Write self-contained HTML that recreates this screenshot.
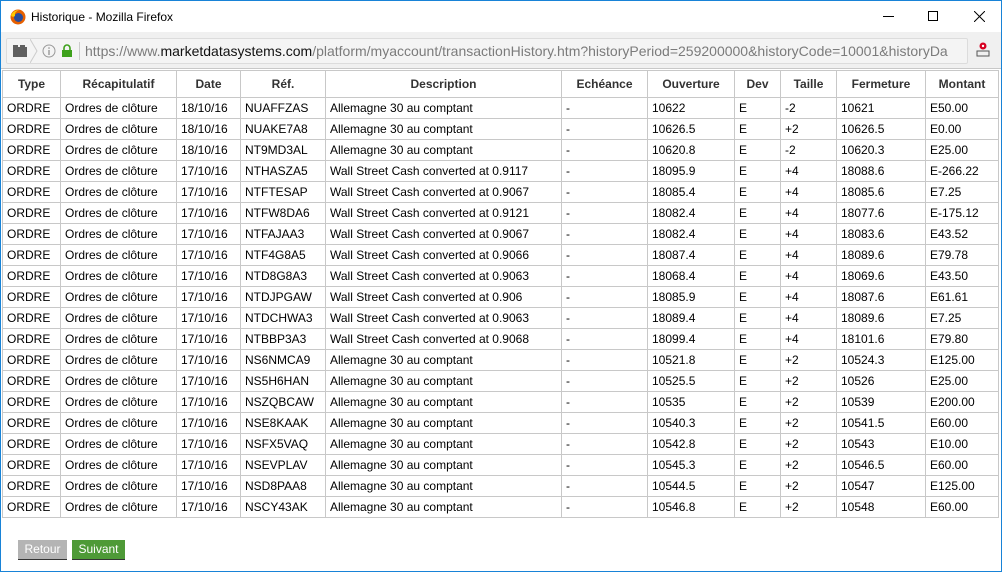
<!DOCTYPE html>
<html><head><style>
*{margin:0;padding:0;box-sizing:border-box}
body{width:1002px;height:572px;overflow:hidden;background:#fff;font-family:"Liberation Sans",Arial,sans-serif;position:relative}
.win{position:absolute;left:0;top:0;width:1002px;height:572px;border:1px solid #1883d7;}
.title{position:absolute;left:0;top:0;width:1000px;height:31px;background:#fff;font-size:12px;color:#000}
.toolbar{position:absolute;left:0;top:31px;width:1000px;height:37px;background:#f0f0f0;border-bottom:1px solid #c8c8c8}
.urlbox{position:absolute;left:5px;top:6px;width:962px;height:26px;background:#f4f4f4;border:1px solid #dcdcdc;border-radius:2px;font-size:14px;color:#7b7b7b;line-height:24px;white-space:nowrap;overflow:hidden}
table{position:absolute;left:1px;top:69px;border-collapse:collapse;font-size:12px;color:#000;table-layout:fixed}
td,th{border:1px solid #c8c8c8;height:21px;padding:0 0 0 4px;white-space:nowrap;overflow:hidden;font-weight:normal;text-align:left}
th{height:27px;font-weight:bold;text-align:center;padding:0;color:#333}
.btn{position:absolute;top:539px;height:20px;font-size:12px;color:#fff;line-height:19px;text-align:center;border-bottom:1px solid #333}
</style></head><body>
<div class="win">
<div class="title">
<svg style="position:absolute;left:9px;top:8px" width="16" height="16" viewBox="0 0 16 16"><circle cx="8" cy="8" r="7.5" fill="#e66000"/><circle cx="8.5" cy="8.5" r="4.5" fill="#2a4d9c"/><path d="M1 6 Q4 1 9 1 Q4 3 5 7 Q2 9 1 6Z" fill="#ffcb00"/></svg>
<span style="position:absolute;left:30px;top:9px">Historique - Mozilla Firefox</span>
<div style="position:absolute;left:882px;top:15px;width:11px;height:1px;background:#000"></div>
<div style="position:absolute;left:927px;top:10px;width:10px;height:10px;border:1px solid #000"></div>
<svg style="position:absolute;left:973px;top:10px" width="11" height="11"><path d="M0 0L11 11M11 0L0 11" stroke="#000" stroke-width="1"/></svg>
</div>
<div class="toolbar">
<div class="urlbox">
<svg style="position:absolute;left:6px;top:6px" width="14" height="12"><rect x="0" y="2" width="14" height="10" fill="#606060"/><rect x="0" y="0" width="5" height="3" fill="#606060"/><rect x="7" y="0" width="5" height="3" fill="#606060"/></svg>
<svg style="position:absolute;left:23px;top:0" width="8" height="24"><path d="M0 0L7 12L0 24" fill="none" stroke="#ccc"/></svg>
<svg style="position:absolute;left:35px;top:5px" width="14" height="14"><circle cx="7" cy="7" r="6" fill="none" stroke="#999"/><rect x="6.3" y="6" width="1.4" height="5" fill="#999"/><rect x="6.3" y="3.3" width="1.4" height="1.5" fill="#999"/></svg>
<svg style="position:absolute;left:54px;top:4px" width="12" height="14"><path d="M3 7V5a3 3 0 0 1 6 0v2" fill="none" stroke="#3ea11b" stroke-width="1.6"/><rect x="1" y="7" width="10" height="7" fill="#3ea11b"/></svg>
<div style="position:absolute;left:72px;top:3px;width:1px;height:18px;background:#ccc"></div>
<span style="position:absolute;left:78px;top:0">https://www.<span style="color:#111">marketdatasystems.com</span>/platform/myaccount/transactionHistory.htm?historyPeriod=259200000&amp;historyCode=10001&amp;historyDa</span>
</div>
<svg style="position:absolute;left:974px;top:10px" width="16" height="16"><circle cx="8" cy="4" r="3.5" fill="#d70022"/><circle cx="8" cy="4" r="1.2" fill="#fff"/><rect x="2" y="9" width="12" height="5" fill="none" stroke="#555"/></svg>
</div>
<table>
<colgroup><col style="width:58px"><col style="width:116px"><col style="width:64px"><col style="width:85px"><col style="width:236px"><col style="width:86px"><col style="width:87px"><col style="width:46px"><col style="width:56px"><col style="width:89px"><col style="width:73px"></colgroup>
<tr><th>Type</th><th>Récapitulatif</th><th>Date</th><th>Réf.</th><th>Description</th><th>Echéance</th><th>Ouverture</th><th>Dev</th><th>Taille</th><th>Fermeture</th><th>Montant</th></tr>
<tr><td>ORDRE</td><td>Ordres de clôture</td><td>18/10/16</td><td>NUAFFZAS</td><td>Allemagne 30 au comptant</td><td>-</td><td>10622</td><td>E</td><td>-2</td><td>10621</td><td>E50.00</td></tr>
<tr><td>ORDRE</td><td>Ordres de clôture</td><td>18/10/16</td><td>NUAKE7A8</td><td>Allemagne 30 au comptant</td><td>-</td><td>10626.5</td><td>E</td><td>+2</td><td>10626.5</td><td>E0.00</td></tr>
<tr><td>ORDRE</td><td>Ordres de clôture</td><td>18/10/16</td><td>NT9MD3AL</td><td>Allemagne 30 au comptant</td><td>-</td><td>10620.8</td><td>E</td><td>-2</td><td>10620.3</td><td>E25.00</td></tr>
<tr><td>ORDRE</td><td>Ordres de clôture</td><td>17/10/16</td><td>NTHASZA5</td><td>Wall Street Cash converted at 0.9117</td><td>-</td><td>18095.9</td><td>E</td><td>+4</td><td>18088.6</td><td>E-266.22</td></tr>
<tr><td>ORDRE</td><td>Ordres de clôture</td><td>17/10/16</td><td>NTFTESAP</td><td>Wall Street Cash converted at 0.9067</td><td>-</td><td>18085.4</td><td>E</td><td>+4</td><td>18085.6</td><td>E7.25</td></tr>
<tr><td>ORDRE</td><td>Ordres de clôture</td><td>17/10/16</td><td>NTFW8DA6</td><td>Wall Street Cash converted at 0.9121</td><td>-</td><td>18082.4</td><td>E</td><td>+4</td><td>18077.6</td><td>E-175.12</td></tr>
<tr><td>ORDRE</td><td>Ordres de clôture</td><td>17/10/16</td><td>NTFAJAA3</td><td>Wall Street Cash converted at 0.9067</td><td>-</td><td>18082.4</td><td>E</td><td>+4</td><td>18083.6</td><td>E43.52</td></tr>
<tr><td>ORDRE</td><td>Ordres de clôture</td><td>17/10/16</td><td>NTF4G8A5</td><td>Wall Street Cash converted at 0.9066</td><td>-</td><td>18087.4</td><td>E</td><td>+4</td><td>18089.6</td><td>E79.78</td></tr>
<tr><td>ORDRE</td><td>Ordres de clôture</td><td>17/10/16</td><td>NTD8G8A3</td><td>Wall Street Cash converted at 0.9063</td><td>-</td><td>18068.4</td><td>E</td><td>+4</td><td>18069.6</td><td>E43.50</td></tr>
<tr><td>ORDRE</td><td>Ordres de clôture</td><td>17/10/16</td><td>NTDJPGAW</td><td>Wall Street Cash converted at 0.906</td><td>-</td><td>18085.9</td><td>E</td><td>+4</td><td>18087.6</td><td>E61.61</td></tr>
<tr><td>ORDRE</td><td>Ordres de clôture</td><td>17/10/16</td><td>NTDCHWA3</td><td>Wall Street Cash converted at 0.9063</td><td>-</td><td>18089.4</td><td>E</td><td>+4</td><td>18089.6</td><td>E7.25</td></tr>
<tr><td>ORDRE</td><td>Ordres de clôture</td><td>17/10/16</td><td>NTBBP3A3</td><td>Wall Street Cash converted at 0.9068</td><td>-</td><td>18099.4</td><td>E</td><td>+4</td><td>18101.6</td><td>E79.80</td></tr>
<tr><td>ORDRE</td><td>Ordres de clôture</td><td>17/10/16</td><td>NS6NMCA9</td><td>Allemagne 30 au comptant</td><td>-</td><td>10521.8</td><td>E</td><td>+2</td><td>10524.3</td><td>E125.00</td></tr>
<tr><td>ORDRE</td><td>Ordres de clôture</td><td>17/10/16</td><td>NS5H6HAN</td><td>Allemagne 30 au comptant</td><td>-</td><td>10525.5</td><td>E</td><td>+2</td><td>10526</td><td>E25.00</td></tr>
<tr><td>ORDRE</td><td>Ordres de clôture</td><td>17/10/16</td><td>NSZQBCAW</td><td>Allemagne 30 au comptant</td><td>-</td><td>10535</td><td>E</td><td>+2</td><td>10539</td><td>E200.00</td></tr>
<tr><td>ORDRE</td><td>Ordres de clôture</td><td>17/10/16</td><td>NSE8KAAK</td><td>Allemagne 30 au comptant</td><td>-</td><td>10540.3</td><td>E</td><td>+2</td><td>10541.5</td><td>E60.00</td></tr>
<tr><td>ORDRE</td><td>Ordres de clôture</td><td>17/10/16</td><td>NSFX5VAQ</td><td>Allemagne 30 au comptant</td><td>-</td><td>10542.8</td><td>E</td><td>+2</td><td>10543</td><td>E10.00</td></tr>
<tr><td>ORDRE</td><td>Ordres de clôture</td><td>17/10/16</td><td>NSEVPLAV</td><td>Allemagne 30 au comptant</td><td>-</td><td>10545.3</td><td>E</td><td>+2</td><td>10546.5</td><td>E60.00</td></tr>
<tr><td>ORDRE</td><td>Ordres de clôture</td><td>17/10/16</td><td>NSD8PAA8</td><td>Allemagne 30 au comptant</td><td>-</td><td>10544.5</td><td>E</td><td>+2</td><td>10547</td><td>E125.00</td></tr>
<tr><td>ORDRE</td><td>Ordres de clôture</td><td>17/10/16</td><td>NSCY43AK</td><td>Allemagne 30 au comptant</td><td>-</td><td>10546.8</td><td>E</td><td>+2</td><td>10548</td><td>E60.00</td></tr>
</table>
<div class="btn" style="left:17px;width:49px;background:#b4b4b4">Retour</div>
<div class="btn" style="left:71px;width:53px;background:#4e9a37">Suivant</div>
</div>
</body></html>
